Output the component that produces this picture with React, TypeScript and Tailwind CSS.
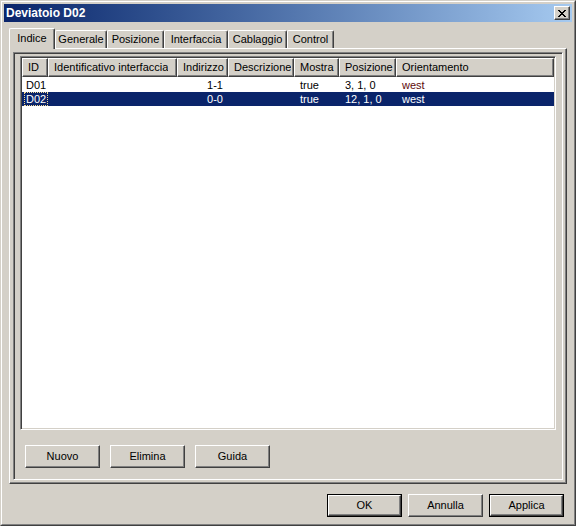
import React from "react";

/* Classic Windows-style "Deviatoio D02" properties dialog. */

const raised =
  "border border-t-white border-l-white border-r-[#404040] border-b-[#404040] shadow-[inset_-1px_-1px_0_#808080]";

const cols = [
  { key: "id", label: "ID", w: "w-[26px]", align: "text-left" },
  { key: "ifc", label: "Identificativo interfaccia", w: "w-[129px]", align: "text-left" },
  { key: "addr", label: "Indirizzo", w: "w-[51px]", align: "text-right" },
  { key: "desc", label: "Descrizione", w: "w-[66px]", align: "text-left" },
  { key: "show", label: "Mostra", w: "w-[45px]", align: "text-left" },
  { key: "pos", label: "Posizione", w: "w-[57px]", align: "text-left" },
  { key: "ori", label: "Orientamento", w: "w-[158px]", align: "text-left" },
] as const;

type Row = Record<(typeof cols)[number]["key"], string>;

const rows: Row[] = [
  { id: "D01", ifc: "", addr: "1-1", desc: "", show: "true", pos: "3, 1, 0", ori: "west" },
  { id: "D02", ifc: "", addr: "0-0", desc: "", show: "true", pos: "12, 1, 0", ori: "west" },
];

const tabs = [
  { label: "Generale", w: "w-[52px]" },
  { label: "Posizione", w: "w-[57px]" },
  { label: "Interfaccia", w: "w-[64px]" },
  { label: "Cablaggio", w: "w-[59px]" },
  { label: "Control", w: "w-[47px]" },
];

function Button({ label, def = false }: { label: string; def?: boolean }) {
  if (def) {
    return (
      <div className="h-[23px] w-[75px] border border-black">
        <button
          type="button"
          className={`flex h-full w-full items-center justify-center bg-[#d4d0c8] text-black ${raised}`}
        >
          {label}
        </button>
      </div>
    );
  }
  return (
    <button
      type="button"
      className={`flex h-[23px] w-[75px] items-center justify-center bg-[#d4d0c8] text-black ${raised}`}
    >
      {label}
    </button>
  );
}

export default function App() {
  return (
    <div
      className="h-[526px] w-[576px] border border-t-[#d4d0c8] border-l-[#d4d0c8] border-r-[#404040] border-b-[#404040] bg-[#d4d0c8] text-[11px] leading-[13px] text-black"
      style={{ fontFamily: '"Liberation Sans", Arial, sans-serif' }}
    >
      <div className="flex h-full flex-col border border-t-white border-l-white border-r-[#808080] border-b-[#808080] p-[2px]">
        {/* title bar */}
        <div className="flex h-[18px] items-center bg-linear-to-r from-[#0a246a] to-[#a6caf0] pl-[2px] pr-[2px]">
          <span className="text-[12px] font-bold text-white">Deviatoio D02</span>
          <div
            className={`ml-auto flex h-[14px] w-[16px] items-center justify-center bg-[#d4d0c8] ${raised}`}
          >
            <svg width="8" height="7" viewBox="0 0 8 7" shapeRendering="crispEdges">
              <path
                d="M0 0h2v1H0zM6 0h2v1H6zM1 1h2v1H1zM5 1h2v1H5zM2 2h4v1H2zM3 3h2v1H3zM2 4h4v1H2zM1 5h2v1H1zM5 5h2v1H5zM0 6h2v1H0zM6 6h2v1H6z"
                fill="#000"
              />
            </svg>
          </div>
        </div>

        <div className="flex flex-1 flex-col px-[5px]">
          {/* tabs */}
          <div className="mt-[6px] flex h-[20px] items-end">
            <div className="relative z-10 -mb-[1px] flex h-[21px] w-[46px] items-center justify-center rounded-t-[2px] border-t border-l border-r border-t-white border-l-white border-r-[#404040] bg-[#d4d0c8] pb-[2px] shadow-[inset_-1px_0_0_#808080]">
              Indice
            </div>
            {tabs.map((t) => (
              <div
                key={t.label}
                className={`flex h-[18px] ${t.w} items-center justify-center rounded-t-[2px] border-t border-l border-r border-t-white border-l-white border-r-[#404040] shadow-[inset_-1px_0_0_#808080]`}
              >
                {t.label}
              </div>
            ))}
          </div>

          {/* tab page */}
          <div className={`h-[436px] bg-[#d4d0c8] p-[3px] ${raised}`}>
            <div className="flex h-full flex-col border border-t-[#808080] border-l-[#808080] border-r-white border-b-white pl-[6px] pt-[3px] shadow-[inset_1px_1px_0_#404040]">
              {/* list */}
              <div className="h-[374px] w-[536px] border border-t-[#808080] border-l-[#808080] border-r-white border-b-white bg-white shadow-[inset_1px_1px_0_#404040,inset_-1px_-1px_0_#d4d0c8] p-[1px]">
                <div className="flex h-[19px]">
                  {cols.map((c) => (
                    <div
                      key={c.key}
                      className={`flex h-full ${c.w} items-center bg-[#d4d0c8] pl-[5px] ${raised} border-t-white`}
                    >
                      <span className="truncate">{c.label}</span>
                    </div>
                  ))}
                </div>
                <div className="mt-[1px]">
                  {rows.map((r, i) => {
                    const sel = i === 1;
                    return (
                      <div
                        key={r.id}
                        className={`flex h-[14px] items-center ${sel ? "bg-[#0a246a] text-white" : ""}`}
                      >
                        {cols.map((c) => (
                          <div
                            key={c.key}
                            className={`${c.w} ${c.align} ${
                              c.key === "id" ? "pl-[2px]" : c.key === "addr" ? "pr-[5px]" : "pl-[6px]"
                            }`}
                          >
                            {c.key === "id" && sel ? (
                              <span className="border border-dotted border-[#f5db95] px-[1px]">{r.id}</span>
                            ) : c.key === "ori" && !sel ? (
                              <span className="text-[#5e0a0a]">{r.ori}</span>
                            ) : c.key === "id" ? (
                              <span className="px-[2px]">{r.id}</span>
                            ) : (
                              r[c.key]
                            )}
                          </div>
                        ))}
                      </div>
                    );
                  })}
                </div>
              </div>

              {/* list actions */}
              <div className="mt-[15px] flex gap-[10px] pl-[5px]">
                <Button label="Nuovo" />
                <Button label="Elimina" />
                <Button label="Guida" />
              </div>
            </div>
          </div>

          {/* dialog buttons */}
          <div className="mt-[10px] flex justify-end gap-[6px] pr-[3px]">
            <Button label="OK" def />
            <Button label="Annulla" />
            <Button label="Applica" def />
          </div>
        </div>
      </div>
    </div>
  );
}
